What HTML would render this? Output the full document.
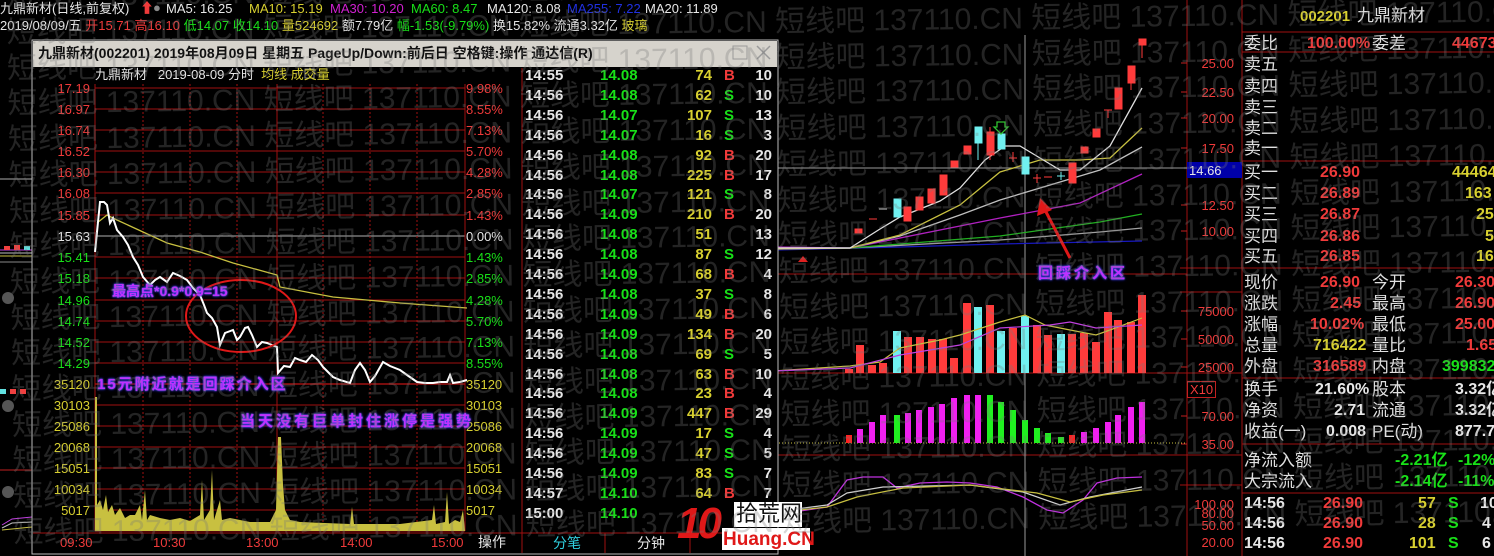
<!DOCTYPE html>
<html><head><meta charset="utf-8">
<style>
*{margin:0;padding:0;box-sizing:border-box}
html{width:1494px;height:556px;overflow:hidden}
body{width:1494px;height:556px;background:#000;overflow:hidden;position:relative;font-family:"Liberation Sans","Noto Sans CJK SC",sans-serif;}
.t{position:absolute;white-space:pre;line-height:1;}
.r{color:#f03a3a}.g{color:#18e018}.y{color:#d8d030}.w{color:#e8e8e8}.c{color:#30d0e0}
.ax{position:absolute;font-size:13px;line-height:1;white-space:pre;text-align:right;width:44px}
.tk{position:absolute;font-size:15px;font-weight:bold;line-height:1;white-space:pre}
.rp{position:absolute;font-size:17px;line-height:1;white-space:pre;color:#e0e0e0}
.rv{position:absolute;font-size:16px;font-weight:bold;line-height:1;white-space:pre}
.ann{position:absolute;white-space:pre;color:#c030ff;font-weight:bold;text-shadow:0 0 2px #4040ff,0 0 3px #2020c0,0 0 1px #fff;line-height:1}
#wmw{position:absolute;left:0;top:0;width:1494px;height:556px;overflow:hidden;pointer-events:none}
#wm{position:absolute;left:0;top:0;width:1494px;height:556px;transform:rotate(-0.8deg);transform-origin:400px 280px}
#wm div{position:absolute;left:10px;font-size:30px;color:rgba(120,120,120,0.3);white-space:pre;line-height:1;font-family:"Liberation Sans","Noto Sans CJK SC",sans-serif}
</style></head><body>

<svg width="1494" height="556" style="position:absolute;left:0;top:0">
<line x1="1187" y1="0" x2="1187" y2="556" stroke="#a01010"/>
<line x1="1242" y1="0" x2="1242" y2="556" stroke="#a01010"/>
<line x1="775" y1="274" x2="1187" y2="274" stroke="#a01010"/>
<line x1="775" y1="373" x2="1187" y2="373" stroke="#a01010"/>
<line x1="775" y1="455" x2="1187" y2="455" stroke="#a01010"/>
<g stroke="#a01010">
<line x1="1242" y1="32" x2="1494" y2="32"/><line x1="1242" y1="52" x2="1494" y2="52"/>
<line x1="1242" y1="161" x2="1494" y2="161"/><line x1="1242" y1="268" x2="1494" y2="268"/>
<line x1="1242" y1="378" x2="1494" y2="378"/><line x1="1242" y1="444" x2="1494" y2="444"/>
<line x1="1242" y1="493" x2="1494" y2="493"/>
<line x1="1180" y1="292" x2="1242" y2="292"/>
<line x1="1180" y1="268" x2="1242" y2="268"/>
<line x1="1180" y1="373" x2="1242" y2="373"/>
<line x1="1180" y1="455" x2="1242" y2="455"/>
<line x1="1180" y1="485" x2="1242" y2="485"/>
</g>
<g stroke="#c02020">
<line x1="1181" y1="63" x2="1187" y2="63"/><line x1="1181" y1="92" x2="1187" y2="92"/><line x1="1181" y1="118" x2="1187" y2="118"/><line x1="1181" y1="148" x2="1187" y2="148"/><line x1="1181" y1="205" x2="1187" y2="205"/><line x1="1181" y1="231" x2="1187" y2="231"/>
<line x1="1181" y1="311" x2="1187" y2="311"/><line x1="1181" y1="339" x2="1187" y2="339"/><line x1="1181" y1="367" x2="1187" y2="367"/><line x1="1181" y1="416" x2="1187" y2="416"/><line x1="1181" y1="444" x2="1187" y2="444"/>
</g>
<line x1="1025" y1="35" x2="1025" y2="556" stroke="#9a9a9a"/>
<line x1="773" y1="168" x2="1187" y2="168" stroke="#9a9a9a"/>
<rect x="1187" y="162" width="55" height="16" fill="#0000a8"/>
<g fill="none" stroke-width="1.3">
<polyline stroke="#1818c0" points="775,250 900,247 1000,244 1142,241"/>
<polyline stroke="#a0a0a0" points="775,249 850,248 1000,240 1100,232 1142,228"/>
<polyline stroke="#20b020" points="775,248 850,248 1000,236 1100,222 1142,214"/>
<polyline stroke="#b020c0" points="775,247 850,248 1000,218 1080,203 1142,174"/>
<polyline stroke="#c0c0c0" points="775,248 850,248 900,236 960,215 1000,200 1040,188 1100,170 1142,147"/>
<polyline stroke="#c8c040" points="775,249 850,248 900,235 960,205 1000,172 1040,160 1080,160 1110,158 1142,128"/>
<polyline stroke="#e0e0e0" points="775,248 850,248 880,229 900,217 940,201 960,188 985,160 1005,146 1020,146 1040,158 1060,170 1080,170 1110,146 1142,88"/>
</g>
<polygon points="798,262 808,262 803,256" fill="#e02020"/>
<g fill="#ff3b3b" stroke="#ff3b3b">
<rect x="855" y="229" width="7" height="4"/>
<line x1="869" y1="219" x2="877" y2="219"/>
<rect x="904" y="207" width="7" height="14"/>
<rect x="916" y="197" width="7" height="13"/>
<rect x="928" y="189" width="7" height="14"/>
<rect x="940" y="175" width="7" height="20"/>
<rect x="951" y="161" width="7" height="6"/>
<rect x="964" y="146" width="7" height="8"/>
<line x1="990" y1="127" x2="990" y2="160"/><rect x="987" y="132" width="7" height="23"/>
<line x1="1009" y1="158" x2="1017" y2="158"/><line x1="1013" y1="152" x2="1013" y2="162"/>
<line x1="1033" y1="178" x2="1041" y2="178"/><line x1="1037" y1="174" x2="1037" y2="183"/>
<line x1="1044" y1="177" x2="1052" y2="177"/>
<rect x="1069" y="163" width="7" height="20"/>
<rect x="1081" y="147" width="7" height="6"/>
<rect x="1093" y="129" width="7" height="8"/>
<line x1="1104" y1="110" x2="1112" y2="110"/><line x1="1108" y1="110" x2="1108" y2="118"/>
<rect x="1115" y="88" width="7" height="21"/>
<line x1="1131" y1="66" x2="1131" y2="90"/><rect x="1128" y="66" width="7" height="17"/>
<line x1="1142" y1="39" x2="1142" y2="58"/><rect x="1139" y="39" width="7" height="6"/>
</g>
<g fill="#70f0f0" stroke="#70f0f0">
<line x1="879" y1="209" x2="887" y2="209" stroke="#ddd"/>
<rect x="894" y="199" width="7" height="18"/>
<line x1="978" y1="127" x2="978" y2="160"/><rect x="975" y="127" width="7" height="16"/>
<rect x="998" y="134" width="7" height="15"/>
<rect x="1022" y="157" width="7" height="17"/>
<line x1="1057" y1="176" x2="1065" y2="176"/><line x1="1061" y1="172" x2="1061" y2="180"/>
</g>
<polygon points="997,122 1005,122 1005,127 1008,127 1001,134 994,127 997,127" fill="none" stroke="#30c030" stroke-width="1.3"/>
<line x1="1070" y1="258" x2="1045" y2="210" stroke="#e01818" stroke-width="3"/>
<polygon points="1040,198 1037,216 1052,210" fill="#e01818"/>
<g fill="#ff3b3b">
<rect x="856" y="345" width="8" height="28"/><rect x="868" y="365" width="8" height="8"/><rect x="879" y="363" width="8" height="10"/>
<rect x="904" y="337" width="8" height="36"/><rect x="916" y="337" width="8" height="36"/><rect x="928" y="339" width="8" height="34"/><rect x="939" y="339" width="8" height="34"/>
<rect x="950" y="358" width="8" height="15"/><rect x="963" y="303" width="8" height="70"/><rect x="986" y="305" width="8" height="68"/>
<rect x="1009" y="328" width="8" height="45"/><rect x="1033" y="325" width="8" height="48"/><rect x="1044" y="335" width="8" height="38"/>
<rect x="1068" y="334" width="8" height="39"/><rect x="1080" y="333" width="8" height="40"/><rect x="1092" y="342" width="8" height="31"/>
<rect x="1104" y="312" width="8" height="61"/><rect x="1114" y="320" width="8" height="53"/><rect x="1127" y="322" width="8" height="51"/><rect x="1138" y="295" width="8" height="78"/>
<rect x="845" y="369" width="8" height="4"/>
</g>
<g fill="#70f0f0">
<rect x="893" y="331" width="8" height="42"/><rect x="974" y="307" width="8" height="66"/><rect x="997" y="331" width="8" height="42"/><rect x="1021" y="316" width="8" height="57"/><rect x="1057" y="334" width="8" height="39"/>
</g>
<polyline fill="none" stroke="#c8c040" stroke-width="1.2" points="773,371 850,366 880,362 900,348 940,340 960,335 1000,322 1025,315 1045,325 1070,330 1096,335 1110,330 1142,318"/>
<polyline fill="none" stroke="#c040e0" stroke-width="1.2" points="773,371 850,368 900,355 960,345 1000,328 1050,325 1070,322 1096,328 1142,325"/>
<line x1="773" y1="443" x2="1187" y2="443" stroke="#c8c040" stroke-dasharray="1,2"/>
<g fill="#f020f0">
<rect x="857" y="429" width="6" height="14"/><rect x="869" y="422" width="6" height="21"/><rect x="880" y="415" width="6" height="28"/>
<rect x="905" y="413" width="6" height="30"/><rect x="916" y="410" width="6" height="33"/><rect x="928" y="407" width="6" height="36"/><rect x="939" y="404" width="6" height="39"/>
<rect x="951" y="398" width="6" height="45"/><rect x="964" y="395" width="6" height="48"/><rect x="975" y="395" width="6" height="48"/>
<rect x="1081" y="432" width="6" height="11"/><rect x="1093" y="428" width="6" height="15"/><rect x="1105" y="422" width="6" height="21"/><rect x="1115" y="415" width="6" height="28"/><rect x="1128" y="407" width="6" height="36"/><rect x="1139" y="402" width="6" height="41"/>
</g>
<g fill="#20f020">
<rect x="894" y="415" width="6" height="28"/><rect x="987" y="395" width="6" height="48"/><rect x="998" y="402" width="6" height="41"/><rect x="1010" y="410" width="6" height="33"/>
<rect x="1022" y="420" width="6" height="23"/><rect x="1034" y="428" width="6" height="15"/><rect x="1045" y="433" width="6" height="10"/><rect x="1058" y="437" width="6" height="6"/>
</g>
<rect x="1069" y="435" width="6" height="8" fill="#ff2020"/><rect x="846" y="435" width="6" height="8" fill="#ff2020"/>
<polyline fill="none" stroke="#c030e0" stroke-width="1.3" points="773,515 827,507 847,480 863,477 883,477 897,488 920,483 947,482 970,483 997,487 1023,497 1047,510 1063,513 1083,500 1097,483 1117,478 1142,477"/>
<polyline fill="none" stroke="#d0d0d0" stroke-width="1.2" points="773,512 827,505 847,493 883,487 970,485 1023,492 1060,505 1090,497 1142,487"/>
<polyline fill="none" stroke="#c8c040" stroke-width="1.2" points="773,513 827,507 857,497 903,488 970,485 1037,493 1070,502 1103,495 1142,490"/>

<line x1="0" y1="179" x2="32" y2="179" stroke="#aaa"/>
<line x1="0" y1="250" x2="32" y2="250" stroke="#c040e0"/><line x1="0" y1="253" x2="32" y2="253" stroke="#c0c0c0"/><line x1="0" y1="256" x2="32" y2="256" stroke="#c8c040"/><line x1="0" y1="262" x2="32" y2="262" stroke="#888"/>
<rect x="4" y="246" width="6" height="4" fill="#f04040"/><rect x="14" y="245" width="6" height="5" fill="#f04040"/><rect x="24" y="246" width="6" height="4" fill="#60e0e0"/>
<circle cx="8" cy="298" r="6" fill="#555"/><circle cx="8" cy="406" r="6" fill="#555"/><circle cx="8" cy="492" r="6" fill="#555"/>
<rect x="0" y="389" width="6" height="5" fill="#60e0e0"/><rect x="10" y="389" width="6" height="5" fill="#f04040"/><rect x="20" y="389" width="6" height="5" fill="#f04040"/>
<line x1="0" y1="470" x2="32" y2="470" stroke="#c02020"/>
<polyline fill="none" stroke="#c040e0" points="2,525 12,519 32,517"/><polyline fill="none" stroke="#c0c0c0" points="2,528 12,523 32,522"/><polyline fill="none" stroke="#c8c040" points="2,530 32,527"/>

<rect x="32" y="40" width="746" height="514" fill="#000" stroke="#bbb"/>
<rect x="33" y="41" width="744" height="26" fill="#d6d3cc"/>
<rect x="733" y="46" width="14" height="13" fill="none" stroke="#999"/>
<path d="M757 46 L770 59 M770 46 L757 59" stroke="#999" stroke-width="1.5"/>
<g stroke="#a01010">
<line x1="95" y1="88" x2="465" y2="88"/><line x1="95" y1="109" x2="465" y2="109"/><line x1="95" y1="130" x2="465" y2="130"/><line x1="95" y1="151" x2="465" y2="151"/><line x1="95" y1="172" x2="465" y2="172"/><line x1="95" y1="193" x2="465" y2="193"/><line x1="95" y1="215" x2="465" y2="215"/><line x1="95" y1="236" x2="465" y2="236" stroke="#b0b0b0"/><line x1="95" y1="257" x2="465" y2="257"/><line x1="95" y1="278" x2="465" y2="278"/><line x1="95" y1="300" x2="465" y2="300"/><line x1="95" y1="321" x2="465" y2="321"/><line x1="95" y1="342" x2="465" y2="342"/><line x1="95" y1="363" x2="465" y2="363"/><line x1="95" y1="384" x2="465" y2="384" stroke-width="1.5"/><line x1="95" y1="405" x2="465" y2="405"/><line x1="95" y1="426" x2="465" y2="426"/><line x1="95" y1="447" x2="465" y2="447"/><line x1="95" y1="468" x2="465" y2="468"/><line x1="95" y1="489" x2="465" y2="489"/><line x1="95" y1="510" x2="465" y2="510"/><line x1="95" y1="531" x2="465" y2="531"/>
<line x1="95" y1="84" x2="95" y2="531"/><line x1="465" y1="84" x2="465" y2="531"/>
<line x1="277" y1="84" x2="277" y2="531"/>
<line x1="522" y1="68" x2="522" y2="553"/>
<line x1="33" y1="533" x2="777" y2="533"/>
<line x1="605" y1="533" x2="605" y2="553"/><line x1="690" y1="533" x2="690" y2="553"/>
</g>
<g stroke="#a01010" stroke-dasharray="2,2">
<line x1="143" y1="84" x2="143" y2="531"/><line x1="190" y1="84" x2="190" y2="531"/><line x1="237" y1="84" x2="237" y2="531"/><line x1="323" y1="84" x2="323" y2="531"/><line x1="370" y1="84" x2="370" y2="531"/><line x1="417" y1="84" x2="417" y2="531"/>
</g>
<polygon fill="#c8c040" points="95,531 95,397 97,397 97,505 100,500 103,510 106,495 108,512 112,505 115,515 120,508 125,518 130,515 135,515 140,505 142,520 145,490 147,520 150,515 160,518 170,520 180,518 190,521 200,515 202,480 204,520 210,510 212,470 214,520 220,500 222,520 230,518 240,520 250,522 260,522 270,522 276,510 278,437 281,437 283,485 285,510 290,520 300,522 350,524 352,507 354,524 400,524 432,520 434,505 436,524 445,522 447,492 449,524 455,520 460,522 463,510 465,531"/>
<polyline fill="none" stroke="#c8c040" stroke-width="1.3" points="97,223 107,215 117,220 167,243 200,252 233,263 277,275 280,287 333,297 400,303 467,308"/>
<polyline fill="none" stroke="#fff" stroke-width="2" points="95,252 100,202 104,202 107,205 110,223 113,218 117,230 123,237 128,245 133,257 138,265 143,277 150,285 155,280 160,277 167,282 173,273 180,276 187,280 193,288 200,295 204,305 207,313 212,318 217,327 220,345 225,333 233,330 237,340 240,337 245,328 248,327 252,335 257,347 262,342 267,343 272,345 277,347 278,373 284,366 290,367 295,358 300,360 306,362 312,355 318,360 323,367 328,372 333,377 340,380 350,383 355,370 360,363 365,370 370,382 375,376 383,362 390,366 400,370 407,375 417,382 425,383 433,383 440,382 447,382 450,375 453,383 460,382 467,380"/>
<ellipse cx="241" cy="316" rx="55" ry="36" fill="none" stroke="#e01818" stroke-width="2"/>
<rect x="305" y="69" width="9" height="9" fill="none" stroke="#888"/>
<rect x="734" y="502" width="68" height="25" fill="#fff"/>
<rect x="722" y="528" width="88" height="22" fill="#fff"/>
</svg>

<div class="t w" style="left:0;top:2px;font-size:13px">九鼎新材(日线,前复权)</div>
<div class="t r" style="left:140px;top:1px;font-size:14px">⬆</div>
<div class="t" style="left:153px;top:1px;font-size:13px;color:#888">●</div>
<div class="t w" style="left:166px;top:2px;font-size:13px">MA5: 16.25</div>
<div class="t y" style="left:249px;top:2px;font-size:13px">MA10: 15.19</div>
<div class="t" style="left:330px;top:2px;font-size:13px;color:#d020d0">MA30: 10.20</div>
<div class="t g" style="left:411px;top:2px;font-size:13px">MA60: 8.47</div>
<div class="t w" style="left:487px;top:2px;font-size:13px">MA120: 8.08</div>
<div class="t" style="left:567px;top:2px;font-size:13px;color:#2030e0">MA255: 7.22</div>
<div class="t w" style="left:645px;top:2px;font-size:13px">MA20: 11.89</div>
<div class="t" style="left:0;top:19px;font-size:13px"><span class="w">2019/08/09/五 </span><span class="r">开15.71 高16.10 </span><span class="g">低14.07 收14.10 </span><span class="y">量524692 </span><span class="w">额7.79亿 </span><span class="g">幅-1.53(-9.79%) </span><span class="w">换15.82% 流通3.32亿 </span><span class="y">玻璃</span></div>

<div class="t" style="left:38px;top:46px;font-size:14px;color:#111;font-weight:bold">九鼎新材(002201) 2019年08月09日 星期五 PageUp/Down:前后日 空格键:操作 通达信(R)</div>
<div class="t" style="left:95px;top:68px;font-size:13px"><span class="w">九鼎新材   2019-08-09 分时  </span><span class="y">均线 成交量</span></div>

<div class="ax r" style="left:46px;top:82px">17.19</div>
<div class="ax r" style="left:46px;top:103px">16.97</div>
<div class="ax r" style="left:46px;top:124px">16.74</div>
<div class="ax r" style="left:46px;top:145px">16.52</div>
<div class="ax r" style="left:46px;top:166px">16.30</div>
<div class="ax r" style="left:46px;top:187px">16.08</div>
<div class="ax r" style="left:46px;top:209px">15.85</div>
<div class="ax w" style="left:46px;top:230px">15.63</div>
<div class="ax g" style="left:46px;top:251px">15.41</div>
<div class="ax g" style="left:46px;top:272px">15.18</div>
<div class="ax g" style="left:46px;top:294px">14.96</div>
<div class="ax g" style="left:46px;top:315px">14.74</div>
<div class="ax g" style="left:46px;top:336px">14.52</div>
<div class="ax g" style="left:46px;top:357px">14.29</div>
<div class="ax y" style="left:46px;top:378px">35120</div>
<div class="ax y" style="left:46px;top:399px">30103</div>
<div class="ax y" style="left:46px;top:420px">25086</div>
<div class="ax y" style="left:46px;top:441px">20068</div>
<div class="ax y" style="left:46px;top:462px">15051</div>
<div class="ax y" style="left:46px;top:483px">10034</div>
<div class="ax y" style="left:46px;top:504px">5017</div>
<div class="ax r" style="left:466px;top:82px;text-align:left">9.98%</div>
<div class="ax r" style="left:466px;top:103px;text-align:left">8.55%</div>
<div class="ax r" style="left:466px;top:124px;text-align:left">7.13%</div>
<div class="ax r" style="left:466px;top:145px;text-align:left">5.70%</div>
<div class="ax r" style="left:466px;top:166px;text-align:left">4.28%</div>
<div class="ax r" style="left:466px;top:187px;text-align:left">2.85%</div>
<div class="ax r" style="left:466px;top:209px;text-align:left">1.43%</div>
<div class="ax w" style="left:466px;top:230px;text-align:left">0.00%</div>
<div class="ax g" style="left:466px;top:251px;text-align:left">1.43%</div>
<div class="ax g" style="left:466px;top:272px;text-align:left">2.85%</div>
<div class="ax g" style="left:466px;top:294px;text-align:left">4.28%</div>
<div class="ax g" style="left:466px;top:315px;text-align:left">5.70%</div>
<div class="ax g" style="left:466px;top:336px;text-align:left">7.13%</div>
<div class="ax g" style="left:466px;top:357px;text-align:left">8.55%</div>
<div class="ax y" style="left:466px;top:378px;text-align:left">35120</div>
<div class="ax y" style="left:466px;top:399px;text-align:left">30103</div>
<div class="ax y" style="left:466px;top:420px;text-align:left">25086</div>
<div class="ax y" style="left:466px;top:441px;text-align:left">20068</div>
<div class="ax y" style="left:466px;top:462px;text-align:left">15051</div>
<div class="ax y" style="left:466px;top:483px;text-align:left">10034</div>
<div class="ax y" style="left:466px;top:504px;text-align:left">5017</div>
<div class="t r" style="left:60px;top:536px;font-size:13px">09:30</div>
<div class="t r" style="left:153px;top:536px;font-size:13px">10:30</div>
<div class="t r" style="left:246px;top:536px;font-size:13px">13:00</div>
<div class="t r" style="left:340px;top:536px;font-size:13px">14:00</div>
<div class="t r" style="left:431px;top:536px;font-size:13px">15:00</div>
<div class="t w" style="left:478px;top:535px;font-size:14px">操作</div>
<div class="t c" style="left:553px;top:536px;font-size:14px">分笔</div>
<div class="t w" style="left:637px;top:536px;font-size:14px">分钟</div>

<div class="ann" style="left:112px;top:284px;font-size:14px">最高点*0.9*0.9=15</div>
<div class="ann" style="left:97px;top:377px;font-size:15px;letter-spacing:2px">15元附近就是回踩介入区</div>
<div class="ann" style="left:240px;top:414px;font-size:15px;letter-spacing:3px">当天没有巨单封住涨停是强势</div>
<div class="ann" style="left:1038px;top:266px;font-size:15px;letter-spacing:3px">回踩介入区</div>

<div id="ticks"></div>
<div class="tk w" style="left:525px;top:68px">14:55</div><div class="tk g" style="left:600px;top:68px">14.08</div><div class="tk y" style="left:672px;top:68px;width:40px;text-align:right">74</div><div class="tk r" style="left:724px;top:68px">B</div><div class="tk w" style="left:748px;top:68px;width:24px;text-align:right">10</div>
<script>
(function(){
var d=[["14:56","14.08","62","S","10"],["14:56","14.07","107","S","13"],["14:56","14.07","16","S","3"],["14:56","14.08","92","B","20"],["14:56","14.08","225","B","17"],["14:56","14.07","121","S","8"],["14:56","14.09","210","B","20"],["14:56","14.08","51","","13"],["14:56","14.08","87","S","12"],["14:56","14.09","68","B","4"],["14:56","14.08","37","S","8"],["14:56","14.09","49","B","6"],["14:56","14.09","134","B","20"],["14:56","14.08","69","S","5"],["14:56","14.08","63","B","10"],["14:56","14.08","23","B","4"],["14:56","14.09","447","B","29"],["14:56","14.09","17","S","4"],["14:56","14.09","47","S","5"],["14:56","14.09","83","S","7"],["14:57","14.10","64","B","7"],["15:00","14.10","","",""]];
var h="";for(var i=0;i<d.length;i++){var y=68+(i+1)*19.9;var r=d[i];
h+='<div class="tk w" style="left:525px;top:'+y+'px">'+r[0]+'</div><div class="tk g" style="left:600px;top:'+y+'px">'+r[1]+'</div><div class="tk y" style="left:672px;top:'+y+'px;width:40px;text-align:right">'+r[2]+'</div><div class="tk '+(r[3]=="B"?"r":"g")+'" style="left:724px;top:'+y+'px">'+r[3]+'</div><div class="tk w" style="left:748px;top:'+y+'px;width:24px;text-align:right">'+r[4]+'</div>';}
document.getElementById("ticks").innerHTML=h;})();
</script>

<div class="ax r" style="left:1190px;top:57px">25.00</div>
<div class="ax r" style="left:1190px;top:86px">22.50</div>
<div class="ax r" style="left:1190px;top:112px">20.00</div>
<div class="ax r" style="left:1190px;top:142px">17.50</div>
<div class="ax w" style="left:1186px;top:164px;text-align:left;padding-left:3px">14.66</div>
<div class="ax r" style="left:1190px;top:199px">12.50</div>
<div class="ax r" style="left:1190px;top:225px">10.00</div>
<div class="ax r" style="left:1190px;top:305px">75000</div>
<div class="ax r" style="left:1190px;top:333px">50000</div>
<div class="ax r" style="left:1190px;top:361px">25000</div>
<div class="t r" style="left:1187px;top:381px;font-size:13px;border:1px solid #c02020;padding:1px 2px">X10</div>
<div class="ax r" style="left:1190px;top:410px">70.00</div>
<div class="ax r" style="left:1190px;top:438px">35.00</div>
<div class="ax r" style="left:1190px;top:498px">100.00</div>
<div class="ax r" style="left:1190px;top:507px">80.00</div>
<div class="ax r" style="left:1190px;top:519px">50.00</div>
<div class="ax r" style="left:1190px;top:536px">20.00</div>

<div class="rv y" style="left:1300px;top:9px;font-size:15px">002201</div>
<div class="rp c" style="left:1357px;top:7px">九鼎新材</div>
<div class="rp" style="left:1244px;top:35px">委比</div><div class="rv r" style="left:1307px;top:36px">100.00%</div><div class="rp" style="left:1372px;top:35px">委差</div><div class="rv r" style="left:1452px;top:36px">44673</div>
<div class="rp" style="left:1244px;top:56px">卖五</div>
<div class="rp" style="left:1244px;top:78px">卖四</div>
<div class="rp" style="left:1244px;top:99px">卖三</div>
<div class="rp" style="left:1244px;top:120px">卖二</div>
<div class="rp" style="left:1244px;top:140px">卖一</div>
<div class="rp" style="left:1244px;top:164px">买一</div><div class="rv r" style="left:1320px;top:165px">26.90</div><div class="rv y" style="left:1452px;top:165px">44464</div>
<div class="rp" style="left:1244px;top:185px">买二</div><div class="rv r" style="left:1320px;top:186px">26.89</div><div class="rv y" style="left:1465px;top:186px">163</div>
<div class="rp" style="left:1244px;top:206px">买三</div><div class="rv r" style="left:1320px;top:207px">26.87</div><div class="rv y" style="left:1476px;top:207px">25</div>
<div class="rp" style="left:1244px;top:228px">买四</div><div class="rv r" style="left:1320px;top:229px">26.86</div><div class="rv y" style="left:1485px;top:229px">5</div>
<div class="rp" style="left:1244px;top:248px">买五</div><div class="rv r" style="left:1320px;top:249px">26.85</div><div class="rv y" style="left:1476px;top:249px">16</div>

<div class="rp" style="left:1244px;top:274px">现价</div><div class="rv r" style="left:1320px;top:275px">26.90</div><div class="rp" style="left:1372px;top:274px">今开</div><div class="rv r" style="left:1455px;top:275px">26.30</div>
<div class="rp" style="left:1244px;top:295px">涨跌</div><div class="rv r" style="left:1330px;top:296px">2.45</div><div class="rp" style="left:1372px;top:295px">最高</div><div class="rv r" style="left:1455px;top:296px">26.90</div>
<div class="rp" style="left:1244px;top:316px">涨幅</div><div class="rv r" style="left:1310px;top:317px">10.02%</div><div class="rp" style="left:1372px;top:316px">最低</div><div class="rv r" style="left:1455px;top:317px">25.00</div>
<div class="rp" style="left:1244px;top:337px">总量</div><div class="rv y" style="left:1313px;top:338px">716422</div><div class="rp" style="left:1372px;top:337px">量比</div><div class="rv r" style="left:1466px;top:338px">1.65</div>
<div class="rp" style="left:1244px;top:358px">外盘</div><div class="rv r" style="left:1313px;top:359px">316589</div><div class="rp" style="left:1372px;top:358px">内盘</div><div class="rv g" style="left:1442px;top:359px">399832</div>

<div class="rp" style="left:1244px;top:381px">换手</div><div class="rv w" style="left:1315px;top:382px">21.60%</div><div class="rp" style="left:1372px;top:381px">股本</div><div class="rv w" style="left:1455px;top:382px">3.32亿</div>
<div class="rp" style="left:1244px;top:402px">净资</div><div class="rv w" style="left:1334px;top:403px">2.71</div><div class="rp" style="left:1372px;top:402px">流通</div><div class="rv w" style="left:1455px;top:403px">3.32亿</div>
<div class="rp" style="left:1244px;top:423px">收益(一)</div><div class="rv w" style="left:1326px;top:424px">0.008</div><div class="rp" style="left:1372px;top:423px">PE(动)</div><div class="rv w" style="left:1455px;top:424px">877.7</div>

<div class="rp" style="left:1244px;top:452px">净流入额</div><div class="rv g" style="left:1395px;top:453px">-2.21亿</div><div class="rv g" style="left:1458px;top:453px">-12%</div>
<div class="rp" style="left:1244px;top:473px">大宗流入</div><div class="rv g" style="left:1395px;top:474px">-2.14亿</div><div class="rv g" style="left:1458px;top:474px">-11%</div>

<div class="rv w" style="left:1244px;top:496px">14:56</div><div class="rv r" style="left:1323px;top:496px">26.90</div><div class="rv y" style="left:1418px;top:496px">57</div><div class="rv g" style="left:1448px;top:496px">S</div><div class="rv w" style="left:1480px;top:496px">10</div>
<div class="rv w" style="left:1244px;top:516px">14:56</div><div class="rv r" style="left:1323px;top:516px">26.90</div><div class="rv y" style="left:1418px;top:516px">28</div><div class="rv g" style="left:1448px;top:516px">S</div><div class="rv w" style="left:1482px;top:516px">4</div>
<div class="rv w" style="left:1244px;top:536px">14:56</div><div class="rv r" style="left:1323px;top:536px">26.90</div><div class="rv y" style="left:1409px;top:536px">101</div><div class="rv g" style="left:1448px;top:536px">S</div><div class="rv w" style="left:1482px;top:536px">6</div>

<div class="t" style="left:677px;top:502px;font-size:44px;font-weight:bold;color:#e01818;letter-spacing:-4px;font-style:italic">10</div>
<div class="t" style="left:736px;top:503px;font-size:22px;color:#111">拾荒网</div>
<div class="t" style="left:723px;top:530px;font-size:19px;color:#e01818;font-weight:bold">Huang.CN</div>

<div id="wmw"><div id="wm"></div></div>
<script>
(function(){var s="";var txt="短线吧 137110.CN 短线吧 137110.CN 短线吧 137110.CN 短线吧 137110.CN 短线吧 137110.CN 短线吧 137110.CN";
for(var k=-1;k<15;k++){s+='<div style="top:'+(13+35.7*k)+'px">'+txt+'</div>';}
document.getElementById("wm").innerHTML=s;})();
</script>
</body></html>
